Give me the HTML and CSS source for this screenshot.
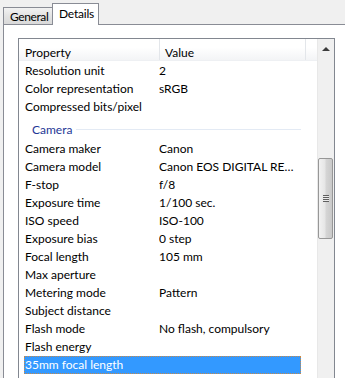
FILE: index.html
```html
<!DOCTYPE html>
<html lang="en">
<head>
  <meta charset="UTF-8" />
  <meta name="viewport" content="width=device-width, initial-scale=1.0"/>
  <title>Properties - Details</title>
  <link rel="stylesheet" href="styles.css">
</head>
<body>

  <!-- Tab strip -->
  <div class="tabs">
    <div class="tab">General</div>
    <div class="tab active">Details</div>
  </div>

  <!-- Tab page -->
  <div class="panel">
    <div class="listbox">
      <div class="list">
        <div class="header">
          <span class="col-name">Property</span>
          <span class="col-value">Value</span>
          <span class="col-rest"></span>
        </div>

        <div class="rows">
          <div class="row"><span class="name">Resolution unit</span><span class="value">2</span></div>
          <div class="row"><span class="name">Color representation</span><span class="value">sRGB</span></div>
          <div class="row"><span class="name">Compressed bits/pixel</span><span class="value"></span></div>

          <div class="group">Camera</div>

          <div class="row"><span class="name">Camera maker</span><span class="value">Canon</span></div>
          <div class="row"><span class="name">Camera model</span><span class="value">Canon EOS DIGITAL REBEL XTi</span></div>
          <div class="row"><span class="name">F-stop</span><span class="value">f/8</span></div>
          <div class="row"><span class="name">Exposure time</span><span class="value">1/100 sec.</span></div>
          <div class="row"><span class="name">ISO speed</span><span class="value">ISO-100</span></div>
          <div class="row"><span class="name">Exposure bias</span><span class="value">0 step</span></div>
          <div class="row"><span class="name">Focal length</span><span class="value">105 mm</span></div>
          <div class="row"><span class="name">Max aperture</span><span class="value"></span></div>
          <div class="row"><span class="name">Metering mode</span><span class="value">Pattern</span></div>
          <div class="row"><span class="name">Subject distance</span><span class="value"></span></div>
          <div class="row"><span class="name">Flash mode</span><span class="value">No flash, compulsory</span></div>
          <div class="row"><span class="name">Flash energy</span><span class="value"></span></div>
          <div class="row selected"><span class="name">35mm focal length</span><span class="value"></span></div>
        </div>
      </div>

      <!-- Vertical scrollbar -->
      <div class="scrollbar">
        <div class="arrow-up"><span class="tri"></span></div>
        <div class="track">
          <div class="thumb"><span class="grip"></span></div>
        </div>
      </div>
    </div>
  </div>

</body>
</html>
```

FILE: styles.css
```css
body {
  margin: 0;
  background-color: #f0f0f0;
  font-family: Lato, "Liberation Sans", sans-serif;
  font-size: 12px;
  color: #000;
  overflow: hidden;
  height: 378px;
}

/* Tabs */
.tabs {
  display: flex;
  align-items: flex-end;
  height: 24px;
  padding-left: 3px;
}

.tab {
  height: 17px;
  line-height: 17px;
  width: 49px;
  box-sizing: border-box;
  padding-left: 6px;
  letter-spacing: -0.4px;
  white-space: nowrap;
  border: 1px solid #898c95;
  border-bottom: none;
  border-right: none;
  background: linear-gradient(#f2f2f2, #e3e3e3 50%, #d9d9d9);
}

.tab.active {
  height: 22px;
  line-height: 20px;
  width: 47px;
  padding-left: 6px;
  letter-spacing: -0.2px;
  margin-bottom: -1px;
  border-right: 1px solid #898c95;
  background: #fff;
  position: relative;
}

/* Tab page */
.panel {
  border-top: 1px solid #898c95;
  border-left: 1px solid #898c95;
  margin-left: 3px;
  background-color: #fff;
  padding: 13px 0 0 14px;
  height: 400px;
}

.listbox {
  display: flex;
  width: 317px;
  height: 400px;
  box-sizing: border-box;
  border: 1px solid #828790;
  background-color: #fff;
}

.list {
  width: 298px;
}

.header {
  display: flex;
  height: 22px;
  line-height: 27px;
  background: linear-gradient(#fff, #fff 40%, #f3f4f6);
  border-bottom: 1px solid #eef0f3;
  box-sizing: border-box;
}

.col-name {
  width: 134px;
  padding-left: 6px;
  border-right: 1px solid #e3e6ea;
}

.col-value {
  width: 140px;
  padding-left: 5px;
  border-right: 1px solid #e3e6ea;
}

.rows {
  padding-top: 1px;
}

.row {
  display: flex;
  height: 18px;
  line-height: 18px;
  margin-left: 5px;
  width: 277px;
  box-sizing: border-box;
  white-space: nowrap;
}

.name {
  width: 135px;
  padding-left: 1px;
  box-sizing: border-box;
}

.value {
  width: 138px;
  overflow: hidden;
  text-overflow: ellipsis;
}

.row.selected {
  background-color: #3399ff;
  color: #fff;
  outline: 1px dotted #c5894a;
  outline-offset: -1px;
}

.group {
  display: flex;
  align-items: center;
  height: 24px;
  margin-left: 13px;
  width: 269px;
  color: #1e3796;
  padding-top: 2px;
  box-sizing: border-box;
}

.group::after {
  content: "";
  flex: 1;
  height: 1px;
  margin-left: 4px;
  background-color: #e3eaf4;
}

/* Scrollbar */
.scrollbar {
  width: 17px;
  background-color: #f0f0f0;
  border-left: 1px solid #e8e8e8;
  box-sizing: border-box;
}

.arrow-up {
  height: 17px;
  display: flex;
  justify-content: center;
  align-items: center;
}

.tri {
  width: 0;
  height: 0;
  border-left: 4px solid transparent;
  border-right: 4px solid transparent;
  border-bottom: 4px solid #3c3c3c;
  margin-top: 2px;
}

.track {
  padding-top: 102px;
}

.thumb {
  width: 15px;
  height: 81px;
  box-sizing: border-box;
  border: 1px solid #979797;
  border-radius: 2px;
  background: linear-gradient(to right, #f2f2f2, #e6e6e6 45%, #d5d5d5 55%, #c9c9c9);
  display: flex;
  justify-content: center;
  align-items: center;
}

.grip {
  width: 6px;
  height: 7px;
  background: repeating-linear-gradient(#5f5f5f 0, #5f5f5f 1px, #eaeaea 1px, #eaeaea 2px);
}
```
